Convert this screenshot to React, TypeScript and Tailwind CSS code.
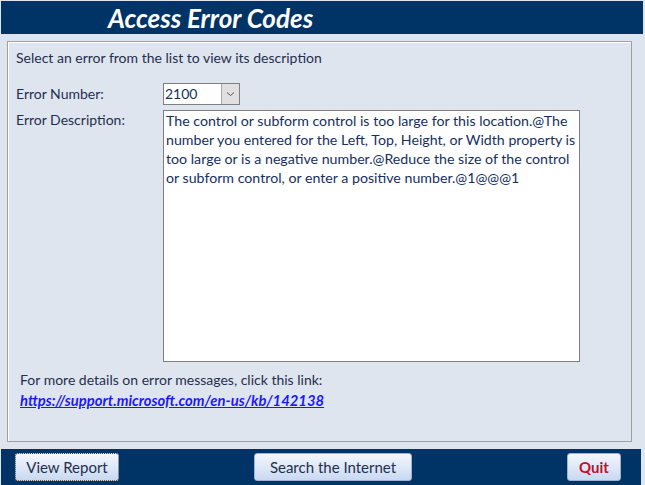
import React from "react";

const font = { fontFamily: "Lato, 'Open Sans', sans-serif" };

function Btn({ children, className = "", focus = false }: { children: React.ReactNode; className?: string; focus?: boolean }) {
  return (
    <div
      className={`h-[28px] flex items-center justify-center rounded-[3px] border text-[15px] bg-gradient-to-b from-[#f4f7fd] to-[#c9d9f1] ${
        focus ? "border-dotted border-[#444]" : "border-[#9fb3d1]"
      } ${className}`}
    >
      {children}
    </div>
  );
}

export default function App() {
  return (
    <div className="w-[645px] h-[485px] bg-[#dfe5ee] relative overflow-hidden text-[#1f2f4f]" style={font}>
      <div className="mt-[1px] ml-[1px] mr-[2px] h-[33px] bg-[#003366] flex items-center">
        <div className="ml-[107px] text-white font-bold italic text-[26px] leading-none">Access Error Codes</div>
      </div>
      <div className="mx-[7px] mt-[7px] h-[401px] w-[625px] border border-[#a0a0a0] shadow-[inset_1px_1px_0_#fff] flex flex-col">
        <div className="pl-[8px] pt-[6px] text-[14px] leading-[20px]">Select an error from the list to view its description</div>
        <div className="flex mt-[15px] pl-[8px]">
          <div className="w-[147px] pt-[1px] text-[14px] leading-[20px]">Error Number:</div>
          <div className="w-[77px] h-[22px] border border-[#7f7f7f] bg-white flex">
            <div className="flex-1 pl-[1px] text-[14px] leading-[20px] text-[#16305e]">2100</div>
            <div className="w-[18px] h-full bg-[#e0e0e0] border-l border-[#a8a8a8] flex items-center justify-center">
              <svg width="9" height="6" viewBox="0 0 9 6"><path d="M1 1.5 L4.5 4.5 L8 1.5" stroke="#555" strokeWidth="1" fill="none" /></svg>
            </div>
          </div>
        </div>
        <div className="flex mt-[5px] pl-[8px]">
          <div className="w-[147px] text-[14px] leading-[20px]">Error Description:</div>
          <div className="w-[417px] h-[252px] border border-[#7f7f7f] bg-white pl-[2px] text-[14.2px] leading-[19px] text-[#16305e] whitespace-nowrap overflow-hidden">
            The control or subform control is too large for this location.@The
            <br />
            number you entered for the Left, Top, Height, or Width property is
            <br />
            too large or is a negative number.@Reduce the size of the control
            <br />
            or subform control, or enter a positive number.@1@@@1
          </div>
        </div>
        <div className="pl-[12px] mt-[8px] text-[14px] leading-[20px]">For more details on error messages, click this link:</div>
        <div className="pl-[12px] text-[14.8px] leading-[20px] font-bold italic underline text-[#1a1aff]">
          https://support.microsoft.com/en-us/kb/142138
        </div>
      </div>
      <div className="absolute left-[1px] right-[4px] top-[449px] bottom-0 bg-[#003366] flex items-center">
        <Btn focus className="ml-[14px] w-[104px] text-[#1f2f4f]">View Report</Btn>
        <Btn className="ml-[135px] w-[158px] text-[#1f2f4f]">Search the Internet</Btn>
        <Btn className="ml-[155px] w-[54px] text-[#c0102a] font-bold">Quit</Btn>
      </div>
    </div>
  );
}
